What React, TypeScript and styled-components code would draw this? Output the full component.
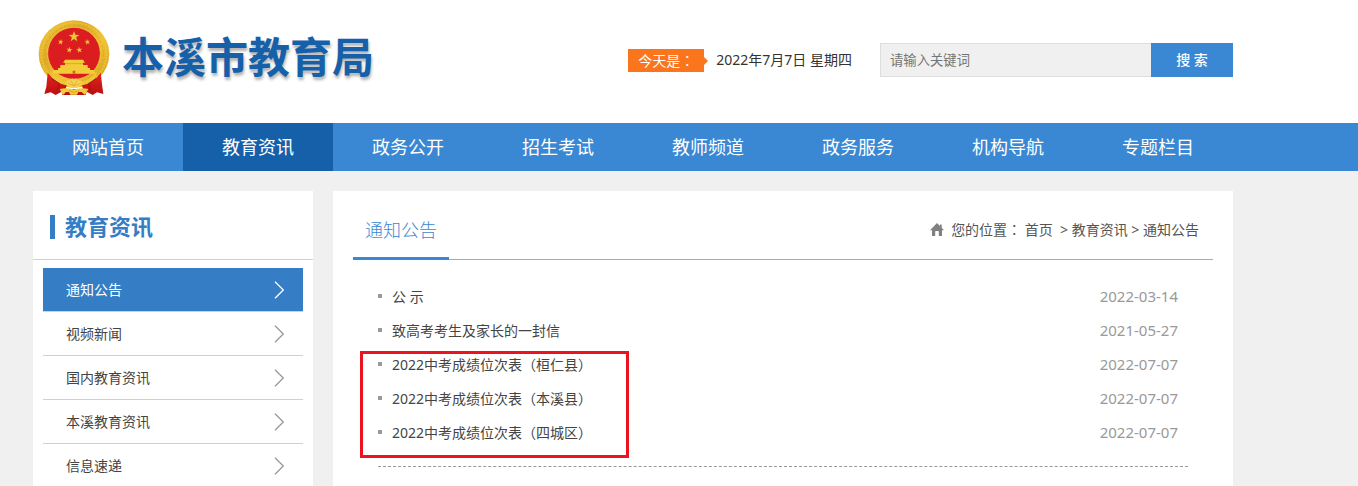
import React from 'react';
import styled, { createGlobalStyle, css } from 'styled-components';

const GlobalStyle = createGlobalStyle`
  * { box-sizing: border-box; }
  body {
    margin: 0;
    background: #f0f0f0;
    color: #444;
    font: 14px/20px "Noto Sans", "Noto Sans CJK SC", sans-serif;
  }
  h1, h2, p, ul { margin: 0; padding: 0; }
  ul { list-style: none; }
  a { color: inherit; text-decoration: none; }
  input, button { font-family: inherit; }
`;

const Page = styled.div`
  height: 100vh;
  display: flex;
  flex-direction: column;
  overflow: hidden auto;
  scrollbar-width: none;
`;

const Container = styled.div`
  width: calc(100% - 66px);
  max-width: 1200px;
  margin-left: 33px;
`;

const Header = styled.header`
  flex: none;
  background: #fff;
`;

const HeaderRow = styled(Container)`
  display: flex;
  align-items: center;
  padding: 20px 0 23px;
`;

const Brand = styled.a`
  display: flex;
  align-items: center;
  gap: 7px;
  margin-right: auto;
`;

const BrandName = styled.h1`
  padding-bottom: 6px;
  color: #1660aa;
  font-size: 42px;
  line-height: 60px;
  font-weight: 700;
  white-space: nowrap;
  text-shadow: 1px 3px 3px rgba(0, 0, 0, 0.3);
`;

const Today = styled.p`
  display: flex;
  align-items: center;
  gap: 12px;
  margin-right: 28px;
  line-height: 22px;
  color: #333;
  white-space: nowrap;
`;

const TodayTag = styled.span`
  position: relative;
  width: 76px;
  padding-left: 10px;
  background: #fa751b;
  color: #fff;
  &::after {
    content: "";
    position: absolute;
    left: 100%;
    top: 8px;
    border: 4px solid transparent;
    border-left-color: #fa751b;
    border-right: 0;
  }
`;

const Colon = styled.span`
  font-family: "Noto Sans CJK TC", sans-serif;
`;

const SearchForm = styled.form`
  display: flex;
  width: 353px;
  height: 34px;
`;

const SearchInput = styled.input`
  flex: 1;
  min-width: 0;
  padding: 0 9px;
  border: 1px solid #ddd;
  border-right: 0;
  border-radius: 0;
  background: #f0f0f0;
  outline: 0;
  &::placeholder { color: #757575; }
`;

const SearchButton = styled.button`
  width: 82px;
  padding: 0 0 2px;
  border: 0;
  background: #3a87d4;
  color: #fff;
  font-size: 14px;
  font-weight: 500;
`;

const Nav = styled.nav`
  flex: none;
  background: #3a87d4;
`;

const NavRow = styled(Container)`
  display: flex;
`;

const NavLink = styled.a<{ $active?: boolean }>`
  flex: 1;
  background: ${p => (p.$active ? '#1660aa' : 'transparent')};
  color: #fff;
  font-size: 18px;
  line-height: 48px;
  text-align: center;
  white-space: nowrap;
`;

const Columns = styled(Container)`
  flex: 1 0 auto;
  display: flex;
  gap: 20px;
  padding-top: 20px;
`;

const Sidebar = styled.aside`
  flex: 0 0 280px;
  background: #fff;
`;

const SideHead = styled.div`
  display: flex;
  align-items: center;
  gap: 10px;
  height: 69px;
  padding: 4px 17px 0;
  border-bottom: 1px solid #d0d0d0;
  &::before {
    content: "";
    width: 5px;
    height: 24px;
    background: #357dc5;
  }
`;

const SideTitle = styled.h2`
  padding-bottom: 2px;
  color: #357dc5;
  font-size: 22px;
  line-height: 32px;
  font-weight: 700;
`;

const SideMenu = styled.ul`
  padding: 8px 10px 0;
`;

const SideLink = styled.a<{ $active?: boolean }>`
  display: flex;
  align-items: center;
  justify-content: space-between;
  height: 44px;
  padding: 0 18px 0 23px;
  border-bottom: 1px solid #d0d0d0;
  svg { color: #999; }
  ${p => p.$active && css`
    background: #357dc5;
    background-clip: padding-box;
    color: #fff;
    svg { color: #fff; }
  `}
`;

const Panel = styled.main`
  flex: 1;
  min-width: 0;
  padding: 0 20px;
  background: #fff;
`;

const PanelHead = styled.div`
  display: flex;
  align-items: flex-end;
  justify-content: space-between;
  height: 69px;
  box-shadow: inset 0 -1px #aaa;
`;

const PanelTitle = styled.h2`
  padding: 0 12px 12px;
  border-bottom: 3px solid #3a87d4;
  color: #3a87d4;
  font-size: 18px;
  line-height: 30px;
  font-weight: 300;
`;

const Breadcrumb = styled.nav`
  display: flex;
  align-items: center;
  gap: 7px;
  padding: 0 14px 20px 0;
  color: #555;
  white-space: pre;
`;

const Notices = styled.div`
  position: relative;
  margin: 20px 25px 0;
  padding-bottom: 16px;
  border-bottom: 1px dashed #999;
`;

const NoticeRow = styled.li`
  display: flex;
  align-items: center;
  height: 34px;
  padding-right: 10px;
  &::before {
    content: "";
    width: 4px;
    height: 4px;
    margin: 0 10px 2px 0;
    background: #999;
  }
`;

const NoticeDate = styled.time`
  margin-left: auto;
  padding-bottom: 2px;
  color: #999;
  font-size: 15px;
`;

const Highlight = styled.div`
  position: absolute;
  left: -18px;
  top: 71px;
  width: 269px;
  height: 107px;
  border: 3px solid #ea1420;
  pointer-events: none;
`;

const STAR = 'M0-10 2.4-3.2 9.5-3.1 3.8 1.2 5.9 8.1 0 4-5.9 8.1-3.8 1.2-9.5-3.1-2.4-3.2Z';

const Emblem = () => (
  <svg width="82" height="80" viewBox="0 14 246 240" aria-hidden="true">
    <defs>
      <linearGradient id="gold" x1="0" y1="0" x2="1" y2="1">
        <stop offset="0" stopColor="#f4c93a" />
        <stop offset="0.35" stopColor="#dfac25" />
        <stop offset="0.6" stopColor="#f2c432" />
        <stop offset="1" stopColor="#d29b18" />
      </linearGradient>
      <linearGradient id="ribbon" x1="0" y1="0" x2="0" y2="1">
        <stop offset="0" stopColor="#e3231d" />
        <stop offset="1" stopColor="#b90f10" />
      </linearGradient>
    </defs>
    <ellipse cx="123" cy="116" rx="106" ry="101" fill="url(#gold)" />
    <ellipse cx="123" cy="116" rx="98" ry="94" fill="none" stroke="#ecc443" strokeWidth="5" strokeDasharray="5 4" />
    <ellipse cx="123" cy="116" rx="88" ry="86" fill="none" stroke="#cf9f25" strokeWidth="2" strokeDasharray="9 5" />
    <ellipse cx="123" cy="114" rx="79" ry="78" fill="#dc1d20" stroke="#f6d653" strokeWidth="2" />
    <g fill="#edc435">
      <path d={STAR} transform="translate(123 64) scale(1.7)" />
      <path d={STAR} transform="translate(83 80) rotate(12) scale(.9)" />
      <path d={STAR} transform="translate(163 80) rotate(-12) scale(.9)" />
      <path d={STAR} transform="translate(109 104) rotate(8) scale(.95)" />
      <path d={STAR} transform="translate(139 104) rotate(-8) scale(.95)" />
    </g>
    <path d="M96 133H150L156 142H150V149H164V158H171V164H182L188 175H58L63 164H75V158H82V149H96V142H90Z" fill="#f3cd39" />
    <path d="M96 145H150" stroke="#d98f1c" strokeWidth="2" />
    <path d="M119 166h8v9h-8z" fill="#c9681a" />
    <path d="M44 172Q68 205 101 210L98 222H150L147 210Q182 204 203 172L208 214 211 236 192 231 179 239 161 229 158 239H88L86 229 68 239 53 231 34 236 40 214Z" fill="url(#ribbon)" />
    <path d="M52 166Q78 198 112 200H134Q170 198 194 166L188 184Q166 206 140 210H106Q78 205 58 184Z" fill="#efc636" />
    <path d="M57 190 79 205 72 227M189 190 167 205 174 227" fill="none" stroke="#a90e12" strokeWidth="3" />
    <path d="M99 205Q99 193 111 195 115 187 123 191 131 187 135 195 147 193 147 205 140 216 123 219 106 217 99 205Z" fill="#f5d352" />
    <path d="M105 204 123 212 142 204M114 196 123 212 132 196" fill="none" stroke="#d9a32b" strokeWidth="2" />
    <path d="M80 221Q102 216 123 223 144 216 166 221L156 239 146 230H136L132 238H112L108 230H99L90 239Z" fill="#f0cb3c" />
    <path d="M108 226 123 231 139 226" fill="none" stroke="#c98f1e" strokeWidth="2" />
  </svg>
);

const Chevron = () => (
  <svg width="11" height="18" viewBox="0 0 11 18" fill="none" stroke="currentColor" strokeWidth="1.3" aria-hidden="true">
    <path d="M1 .7 9.3 9 1 17.3" />
  </svg>
);

const HomeIcon = () => (
  <svg width="14" height="13" viewBox="0 0 14 13" fill="#808080" aria-hidden="true">
    <path d="M7 0 0 7.2H2V13H5.2V8.8Q5.2 8 6 8H8Q8.8 8 8.8 8.8V13H12V7.2H14L11.7 4.8V1.5H10V3.1Z" />
  </svg>
);

const navItems = ['网站首页', '教育资讯', '政务公开', '招生考试', '教师频道', '政务服务', '机构导航', '专题栏目'];
const sideItems = ['通知公告', '视频新闻', '国内教育资讯', '本溪教育资讯', '信息速递'];
const notices = [
  { title: '公 示', date: '2022-03-14' },
  { title: '致高考考生及家长的一封信', date: '2021-05-27' },
  { title: '2022中考成绩位次表（桓仁县）', date: '2022-07-07' },
  { title: '2022中考成绩位次表（本溪县）', date: '2022-07-07' },
  { title: '2022中考成绩位次表（四城区）', date: '2022-07-07' },
];

export default function App() {
  return (
    <Page>
      <GlobalStyle />
      <Header>
        <HeaderRow>
          <Brand href="#">
            <Emblem />
            <BrandName>本溪市教育局</BrandName>
          </Brand>
          <Today>
            <TodayTag>今天是<Colon>：</Colon></TodayTag>
            <span>2022年7月7日 星期四</span>
          </Today>
          <SearchForm onSubmit={e => e.preventDefault()}>
            <SearchInput type="text" aria-label="请输入关键词" placeholder="请输入关键词" />
            <SearchButton type="submit">搜 索</SearchButton>
          </SearchForm>
        </HeaderRow>
      </Header>
      <Nav>
        <NavRow>
          {navItems.map(item => (
            <NavLink key={item} href="#" $active={item === '教育资讯'}>{item}</NavLink>
          ))}
        </NavRow>
      </Nav>
      <Columns>
        <Sidebar>
          <SideHead><SideTitle>教育资讯</SideTitle></SideHead>
          <SideMenu>
            {sideItems.map((item, i) => (
              <li key={item}>
                <SideLink href="#" $active={i === 0}>{item}<Chevron /></SideLink>
              </li>
            ))}
          </SideMenu>
        </Sidebar>
        <Panel>
          <PanelHead>
            <PanelTitle>通知公告</PanelTitle>
            <Breadcrumb>
              <HomeIcon />
              <span>您的位置<Colon>：</Colon> <a href="#">首页</a>{'  > '}<a href="#">教育资讯</a>{' > '}<a href="#">通知公告</a></span>
            </Breadcrumb>
          </PanelHead>
          <Notices>
            <ul>
              {notices.map(n => (
                <NoticeRow key={n.title}>
                  <a href="#">{n.title}</a>
                  <NoticeDate dateTime={n.date}>{n.date}</NoticeDate>
                </NoticeRow>
              ))}
            </ul>
            <Highlight />
          </Notices>
        </Panel>
      </Columns>
    </Page>
  );
}
